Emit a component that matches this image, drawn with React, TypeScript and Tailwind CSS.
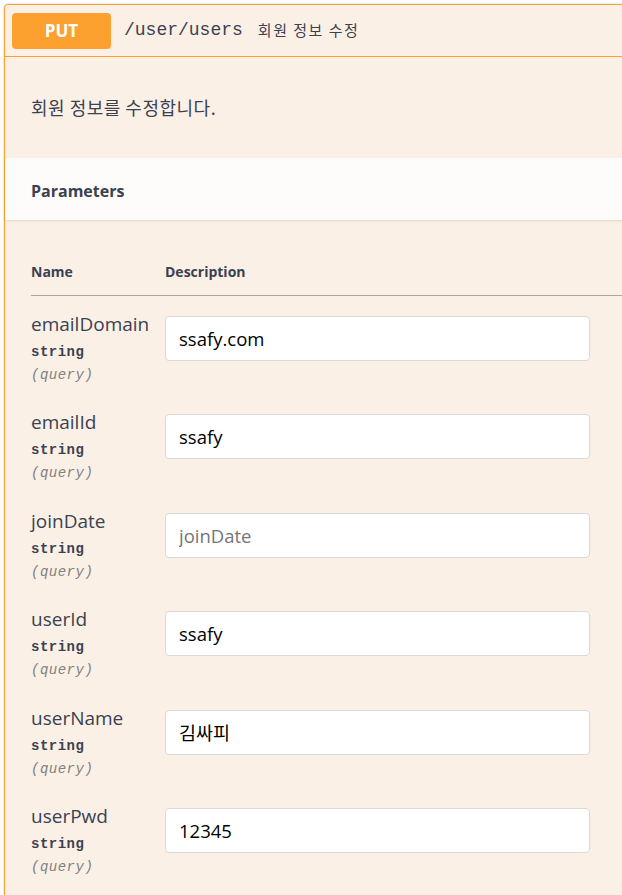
const params = [
  { name: "emailDomain", value: "ssafy.com" },
  { name: "emailId", value: "ssafy" },
  { name: "joinDate", value: "" },
  { name: "userId", value: "ssafy" },
  { name: "userName", value: "김싸피" },
  { name: "userPwd", value: "12345" },
];

const sans = "font-['Open_Sans','Noto_Sans_CJK_KR',sans-serif]";
const mono = "font-['Liberation_Mono','Noto_Sans_CJK_KR',monospace]";
const kr = "font-['Noto_Sans_CJK_KR',sans-serif]";

export default function App() {
  return (
    <div className={`h-[895px] w-[622px] overflow-hidden bg-white pl-1 pt-1 text-[#3b4151] ${sans}`}>
      <div className="w-[680px] rounded-[4px] border border-[#fca130] bg-[#fbf0e6] shadow-[0_0_3px_rgba(0,0,0,0.19)]">
        {/* summary bar */}
        <div className="flex h-[52px] items-center border-b border-[#fca130] px-[7px]">
          <span className="flex h-[36px] w-[99px] items-center justify-center rounded-[4px] bg-[#fca130] text-[17px] font-bold text-white">
            PUT
          </span>
          <span className={`ml-[13px] text-[18px] ${mono}`}>/user/users</span>
          <span className={`ml-[15px] text-[15px] tracking-[1.5px] ${kr}`}>회원 정보 수정</span>
        </div>

        <div className={`flex h-[101px] items-center pl-[26px] text-[18px] tracking-[0.5px] text-[#3b4151] ${kr}`}>
          회원 정보를 수정합니다.
        </div>

        <div className="flex h-[62px] items-center bg-[#fefcfa] pb-[-2px] pl-[26px] shadow-[0_1px_2px_rgba(0,0,0,0.1)]">
          <h4 className="mt-[3px] text-[16px] font-bold">Parameters</h4>
        </div>

        {/* parameter table */}
        <div className="pl-[26px] pt-[39px]">
          <div className="flex h-[24px] items-center text-[14px] font-bold">
            <span className="w-[134px]">Name</span>
            <span>Description</span>
          </div>
          <div className="mt-[12px] border-t border-[#aea79f]" />

          <div className="pt-[16px]">
            {params.map((p) => (
              <div key={p.name} className="flex h-[98.4px]">
                <div className="w-[134px]">
                  <div className="h-[24px] text-[19px] leading-[24px]">{p.name}</div>
                  <div className={`mt-[4px] text-[14px] font-bold leading-[24px] tracking-[0.5px] ${mono}`}>string</div>
                  <div className={`text-[14px] italic leading-[22px] tracking-[0.5px] text-[#808080] ${mono}`}>(query)</div>
                </div>
                <input
                  readOnly
                  defaultValue={p.value}
                  placeholder={p.name}
                  className={`mt-[4px] h-[45px] w-[425px] rounded-[4px] border border-[#d9d9d9] bg-white px-[13px] text-[18.5px] text-black outline-none placeholder:text-[#757575] ${sans}`}
                />
              </div>
            ))}
          </div>
        </div>
      </div>
    </div>
  );
}
